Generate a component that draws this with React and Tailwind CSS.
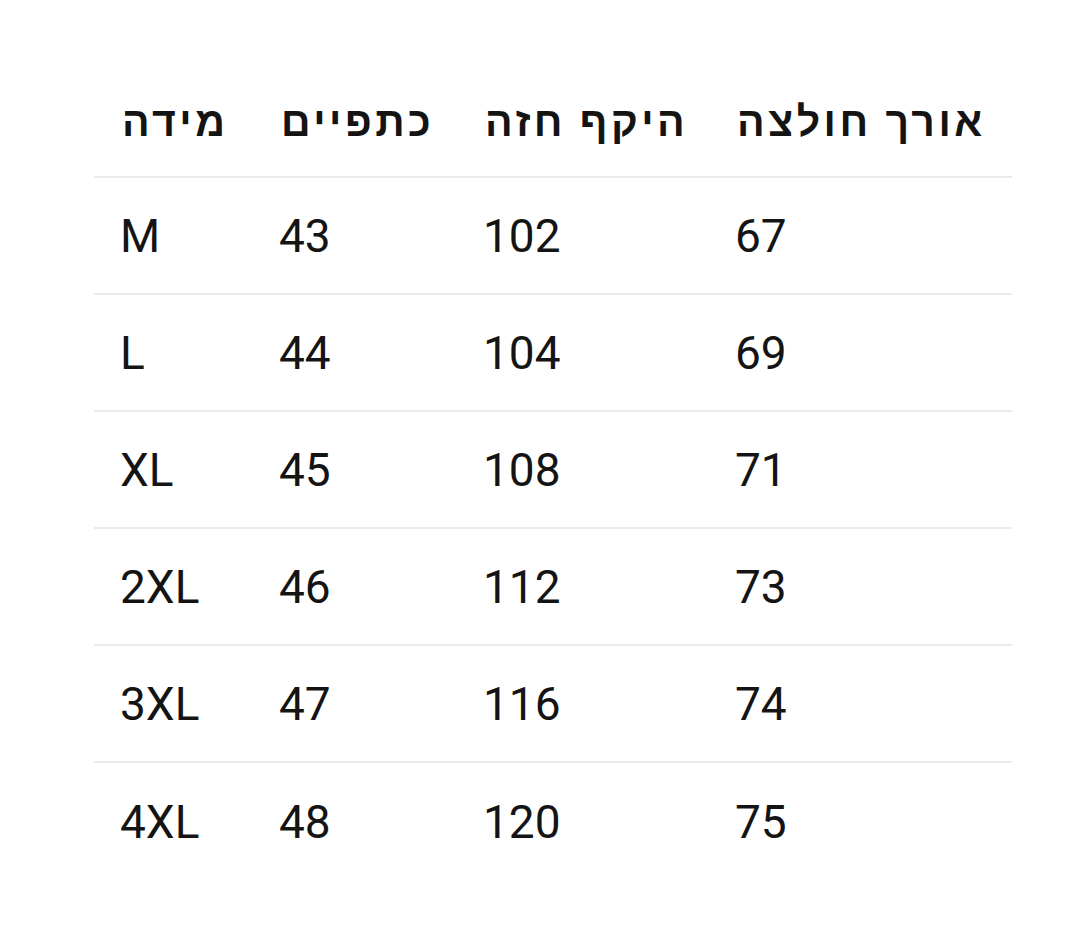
export default function App() {
  const headers = ["מידה", "כתפיים", "היקף חזה", "אורך חולצה"];
  const rows = [
    ["M", "43", "102", "67"],
    ["L", "44", "104", "69"],
    ["XL", "45", "108", "71"],
    ["2XL", "46", "112", "73"],
    ["3XL", "47", "116", "74"],
    ["4XL", "48", "120", "75"],
  ];
  const widths = ["w-[159px]", "w-[204px]", "w-[252px]", "w-[303px]"];
  return (
    <div
      className="w-[1080px] h-[944px] bg-white text-[#141414] pt-[60px] pl-[94px]"
      style={{ fontFamily: 'Roboto, "Noto Sans", sans-serif' }}
    >
      <div className="w-[918px]">
        <div className="flex h-[118px] items-center border-b-2 border-[#ebebeb]">
          {headers.map((h, i) => (
            <div key={i} className={`${widths[i]} pl-[28px] pt-[8px] text-[41px] font-semibold tracking-[3.5px] leading-none`}>
              {h}
            </div>
          ))}
        </div>
        {rows.map((r, ri) => (
          <div
            key={ri}
            className={`flex h-[117px] items-center ${ri < rows.length - 1 ? "border-b-2 border-[#ebebeb]" : ""}`}
          >
            {r.map((c, i) => (
              <div key={i} className={`${widths[i]} pl-[26px] text-[46px] leading-none`}>
                {c}
              </div>
            ))}
          </div>
        ))}
      </div>
    </div>
  );
}
